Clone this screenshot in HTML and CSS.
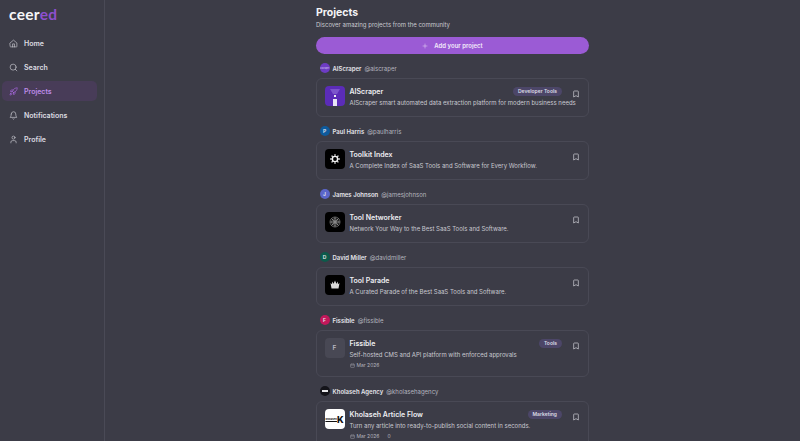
FILE: index.html
```html
<!DOCTYPE html>
<html lang="en">
<head>
<meta charset="utf-8">
<title>Projects</title>
<link rel="stylesheet" href="styles.css">
</head>
<body>
<div class="app">
  <aside class="sidebar">
    <div class="logo">ceer<span class="logo-accent">ed</span></div>
    <nav class="nav">
      <a class="nav-item"><svg class="nav-icon" viewBox="0 0 24 24"><path d="M3 10.5 12 3l9 7.5V20a1 1 0 0 1-1 1H4a1 1 0 0 1-1-1z"/><path d="M9.5 21v-8h5v8"/></svg>Home</a>
      <a class="nav-item"><svg class="nav-icon" viewBox="0 0 24 24"><circle cx="11" cy="11" r="8"/><path d="m21 21-4.3-4.3"/></svg>Search</a>
      <a class="nav-item active"><svg class="nav-icon" viewBox="0 0 24 24"><path d="M4.5 16.5c-1.5 1.26-2 5-2 5s3.74-.5 5-2c.71-.84.7-2.13-.09-2.91a2.18 2.18 0 0 0-2.91-.09z"/><path d="m12 15-3-3a22 22 0 0 1 2-3.95A12.88 12.88 0 0 1 22 2c0 2.72-.78 7.5-6 11a22.35 22.35 0 0 1-4 2z"/><path d="M9 12H4s.55-3.03 2-4c1.62-1.08 5 0 5 0"/><path d="M12 15v5s3.03-.55 4-2c1.08-1.62 0-5 0-5"/></svg>Projects</a>
      <a class="nav-item"><svg class="nav-icon" viewBox="0 0 24 24"><path d="M6 8a6 6 0 0 1 12 0c0 7 3 9 3 9H3s3-2 3-9"/><path d="M10.3 21a1.94 1.94 0 0 0 3.4 0"/></svg>Notifications</a>
      <a class="nav-item"><svg class="nav-icon" viewBox="0 0 24 24"><path d="M19 21v-2a4 4 0 0 0-4-4H9a4 4 0 0 0-4 4v2"/><circle cx="12" cy="7" r="4"/></svg>Profile</a>
    </nav>
  </aside>
  <main class="main">
    <div class="content">
      <h1 class="title">Projects</h1>
      <p class="subtitle">Discover amazing projects from the community</p>
      <button class="add-btn"><svg class="add-icon" viewBox="0 0 24 24"><path d="M12 4v16M4 12h16"/></svg>Add your project</button>

      <section class="group">
        <div class="owner"><span class="avatar av-aiscraper">AIScraper</span><span class="owner-name">AIScraper</span><span class="owner-handle">@aiscraper</span></div>
        <article class="card">
          <div class="thumb thumb-purple">
            <svg class="thumb-art" viewBox="0 0 20 20"><path class="ai-fade" d="M5 3h10l-3 5H8z"/><rect class="ai-dot" x="9" y="9" width="2" height="2"/><rect class="ai-bar" x="8" y="13" width="4" height="7"/></svg>
          </div>
          <div class="card-body">
            <div class="card-head"><h2 class="card-title">AIScraper</h2><span class="tag">Developer Tools</span></div>
            <p class="card-desc">AIScraper smart automated data extraction platform for modern business needs</p>
          </div>
          <svg class="bookmark" viewBox="0 0 24 24"><path d="M19 21l-7-4-7 4V5a2 2 0 0 1 2-2h10a2 2 0 0 1 2 2z"/></svg>
        </article>
      </section>

      <section class="group">
        <div class="owner"><span class="avatar av-blue">P</span><span class="owner-name">Paul Harris</span><span class="owner-handle">@paulharris</span></div>
        <article class="card">
          <div class="thumb thumb-black">
            <svg class="thumb-art" viewBox="0 0 20 20"><circle class="gear-ring" cx="10" cy="10" r="2.6"/><path class="gear-spokes" d="M10 5.2v1.6M10 13.2v1.6M5.2 10h1.6M13.2 10h1.6M6.6 6.6l1.1 1.1M12.3 12.3l1.1 1.1M6.6 13.4l1.1-1.1M12.3 7.7l1.1-1.1"/></svg>
          </div>
          <div class="card-body">
            <div class="card-head"><h2 class="card-title">Toolkit Index</h2></div>
            <p class="card-desc">A Complete Index of SaaS Tools and Software for Every Workflow.</p>
          </div>
          <svg class="bookmark" viewBox="0 0 24 24"><path d="M19 21l-7-4-7 4V5a2 2 0 0 1 2-2h10a2 2 0 0 1 2 2z"/></svg>
        </article>
      </section>

      <section class="group">
        <div class="owner"><span class="avatar av-indigo">J</span><span class="owner-name">James Johnson</span><span class="owner-handle">@jamesjohnson</span></div>
        <article class="card">
          <div class="thumb thumb-black">
            <svg class="thumb-art" viewBox="0 0 20 20"><circle class="mesh" cx="10" cy="10" r="5"/><circle class="mesh" cx="10" cy="10" r="3.4"/><circle class="mesh" cx="10" cy="10" r="1.8"/><path class="mesh" d="M5 10h10M10 5v10M6.5 6.5l7 7M6.5 13.5l7-7"/></svg>
          </div>
          <div class="card-body">
            <div class="card-head"><h2 class="card-title">Tool Networker</h2></div>
            <p class="card-desc">Network Your Way to the Best SaaS Tools and Software.</p>
          </div>
          <svg class="bookmark" viewBox="0 0 24 24"><path d="M19 21l-7-4-7 4V5a2 2 0 0 1 2-2h10a2 2 0 0 1 2 2z"/></svg>
        </article>
      </section>

      <section class="group">
        <div class="owner"><span class="avatar av-green">D</span><span class="owner-name">David Miller</span><span class="owner-handle">@davidmiller</span></div>
        <article class="card">
          <div class="thumb thumb-black">
            <svg class="thumb-art" viewBox="0 0 20 20"><path class="crown" d="M5.5 8l1.6 1.2L7 6.5l1.6 2.2L10 5.5l1.4 3.2L13 6.5l-.1 2.7L14.5 8l-1 5.5h-7z"/></svg>
          </div>
          <div class="card-body">
            <div class="card-head"><h2 class="card-title">Tool Parade</h2></div>
            <p class="card-desc">A Curated Parade of the Best SaaS Tools and Software.</p>
          </div>
          <svg class="bookmark" viewBox="0 0 24 24"><path d="M19 21l-7-4-7 4V5a2 2 0 0 1 2-2h10a2 2 0 0 1 2 2z"/></svg>
        </article>
      </section>

      <section class="group">
        <div class="owner"><span class="avatar av-pink">F</span><span class="owner-name">Fissible</span><span class="owner-handle">@fissible</span></div>
        <article class="card">
          <div class="thumb thumb-muted">F</div>
          <div class="card-body">
            <div class="card-head"><h2 class="card-title">Fissible</h2><span class="tag">Tools</span></div>
            <p class="card-desc">Self-hosted CMS and API platform with enforced approvals</p>
            <div class="meta"><span class="meta-item"><svg class="meta-icon" viewBox="0 0 24 24"><rect x="3" y="5" width="18" height="16" rx="2"/><path d="M3 10h18M8 3v4M16 3v4"/></svg>Mar 2026</span></div>
          </div>
          <svg class="bookmark" viewBox="0 0 24 24"><path d="M19 21l-7-4-7 4V5a2 2 0 0 1 2-2h10a2 2 0 0 1 2 2z"/></svg>
        </article>
      </section>

      <section class="group">
        <div class="owner"><span class="avatar av-black"><span class="av-mark"></span></span><span class="owner-name">Kholaseh Agency</span><span class="owner-handle">@kholasehagency</span></div>
        <article class="card">
          <div class="thumb thumb-white"><span class="k-word">kholaseh</span><span class="k-letter">K</span></div>
          <div class="card-body">
            <div class="card-head"><h2 class="card-title">Kholaseh Article Flow</h2><span class="tag">Marketing</span></div>
            <p class="card-desc">Turn any article into ready-to-publish social content in seconds.</p>
            <div class="meta"><span class="meta-item"><svg class="meta-icon" viewBox="0 0 24 24"><rect x="3" y="5" width="18" height="16" rx="2"/><path d="M3 10h18M8 3v4M16 3v4"/></svg>Mar 2026</span><span class="meta-item">0</span></div>
          </div>
          <svg class="bookmark" viewBox="0 0 24 24"><path d="M19 21l-7-4-7 4V5a2 2 0 0 1 2-2h10a2 2 0 0 1 2 2z"/></svg>
        </article>
      </section>
    </div>
  </main>
</div>
</body>
</html>
```
FILE: styles.css
```css
* { box-sizing: border-box; }
html, body { margin: 0; height: 100%; overflow: hidden; }
body { background: #3c3c47; color: #ececf1; font-family: Inter, "Noto Sans", sans-serif; }
.app { display: flex; height: 441px; overflow: hidden; }

.sidebar { width: 105px; flex: none; border-right: 1px solid #4a4a56; padding: 5px 2px 0; }
.logo { font-family: Lato, Inter, sans-serif; font-weight: 700; font-size: 15.5px; line-height: 18px; letter-spacing: 0.3px; color: #f6f6f8; padding-left: 7px; margin-bottom: 10px; }
.logo-accent { color: #8e50cf; }
.nav { display: flex; flex-direction: column; gap: 4px; width: 95px; }
.nav-item { display: flex; align-items: center; gap: 6px; height: 20px; padding: 0 7px; border-radius: 5px; font-size: 7px; font-weight: 600; color: #dcdce2; }
.nav-item.active { background: #483c58; color: #bd8be8; }
.nav-icon { width: 9px; height: 9px; fill: none; stroke: currentColor; stroke-width: 1.8; stroke-linecap: round; stroke-linejoin: round; flex: none; }
.nav-item .nav-icon { color: #c8c8d0; }
.nav-item.active .nav-icon { color: #a869e0; }

.main { flex: 1; display: flex; justify-content: center; min-width: 0; }
.content { width: 273px; flex: none; padding-top: 7px; margin-right: 0; }
.title { margin: 0; font-size: 10.5px; line-height: 12px; font-weight: 700; color: #f4f4f7; }
.subtitle { margin: 1px 0 0; font-size: 6px; line-height: 10px; color: #c9c9d1; }
.add-btn { display: flex; align-items: center; justify-content: center; gap: 6px; width: 100%; height: 17px; margin: 7px 0 8px; border: 0; border-radius: 9px; background: #9b5bd5; color: #f2eafa; font: 600 6px Inter, sans-serif; padding: 0; }
.add-icon { width: 6px; height: 6px; fill: none; stroke: currentColor; stroke-width: 1.8; stroke-linecap: round; }

.group { margin-bottom: 8px; }
.owner { display: flex; align-items: center; height: 12px; margin: 0 0 4px 3.5px; gap: 3px; font-size: 6px; }
.avatar { width: 10px; height: 10px; border-radius: 50%; flex: none; display: flex; align-items: center; justify-content: center; font-size: 5px; font-weight: 600; color: #e6e6ee; overflow: hidden; margin-right: 0; }
.av-aiscraper { background: #6d3cc4; font-size: 2px; color: #c9b5ec; }
.av-blue { background: #0e5a9c; }
.av-indigo { background: #5b66c9; }
.av-green { background: #0d5a4b; }
.av-pink { background: #c2185b; }
.av-black { background: #14141a; }
.av-mark { width: 6px; height: 1.5px; background: #e8e8ea; }
.owner-name { font-weight: 600; color: #e4e4ea; }
.owner-handle { color: #b4b4be; }

.card { display: flex; align-items: flex-start; min-height: 39px; padding: 7px 8px 7px 7.5px; border: 1px solid #494955; border-radius: 6px; position: relative; }
.thumb { width: 20px; height: 20px; flex: none; border-radius: 4px; display: flex; align-items: center; justify-content: center; overflow: hidden; }
.thumb-art { width: 20px; height: 20px; }
.thumb-purple { background: #5b2cb8; }
.thumb-black { background: #000; }
.thumb-muted { background: #484854; color: #b8b8c2; font-size: 6.5px; font-weight: 600; }
.thumb-white { background: #fff; position: relative; gap: 0; color: #111; }
.k-word { font-size: 2.6px; font-weight: 700; text-decoration: underline; }
.k-letter { font-size: 9px; font-weight: 800; line-height: 9px; }
.ai-fade { fill: #7c55cc; }
.ai-dot { fill: #eee; }
.ai-bar { fill: #e9e6f5; }
.gear-ring { fill: none; stroke: #f2f2f2; stroke-width: 1.4; }
.gear-spokes { fill: none; stroke: #f2f2f2; stroke-width: 1.3; }
.mesh { fill: none; stroke: #bdbdbd; stroke-width: 0.5; }
.crown { fill: #d8d8d8; }

.card-body { flex: 1; min-width: 0; margin-left: 5px; padding-top: 1px; }
.card-head { display: flex; align-items: center; justify-content: space-between; height: 9px; }
.card-title { margin: 0; font-size: 7px; line-height: 9px; font-weight: 600; color: #eeeef2; }
.tag { height: 9px; padding: 0 5px; border-radius: 5px; background: #4c4668; color: #dcdce6; font-size: 5px; font-weight: 600; line-height: 9px; }
.card-desc { margin: 2px 0 0; font-size: 6px; line-height: 9px; color: #c9c9d1; white-space: nowrap; }
.meta { display: flex; gap: 8px; margin-top: 3px; font-size: 5px; line-height: 7px; color: #b4b4be; }
.meta-item { display: flex; align-items: center; gap: 2px; }
.meta-icon { width: 5px; height: 5px; fill: none; stroke: currentColor; stroke-width: 2; }
.bookmark { width: 8px; height: 8px; flex: none; margin: 4px 0 0 10px; fill: none; stroke: #d8d8de; stroke-width: 2; stroke-linejoin: round; }
```
